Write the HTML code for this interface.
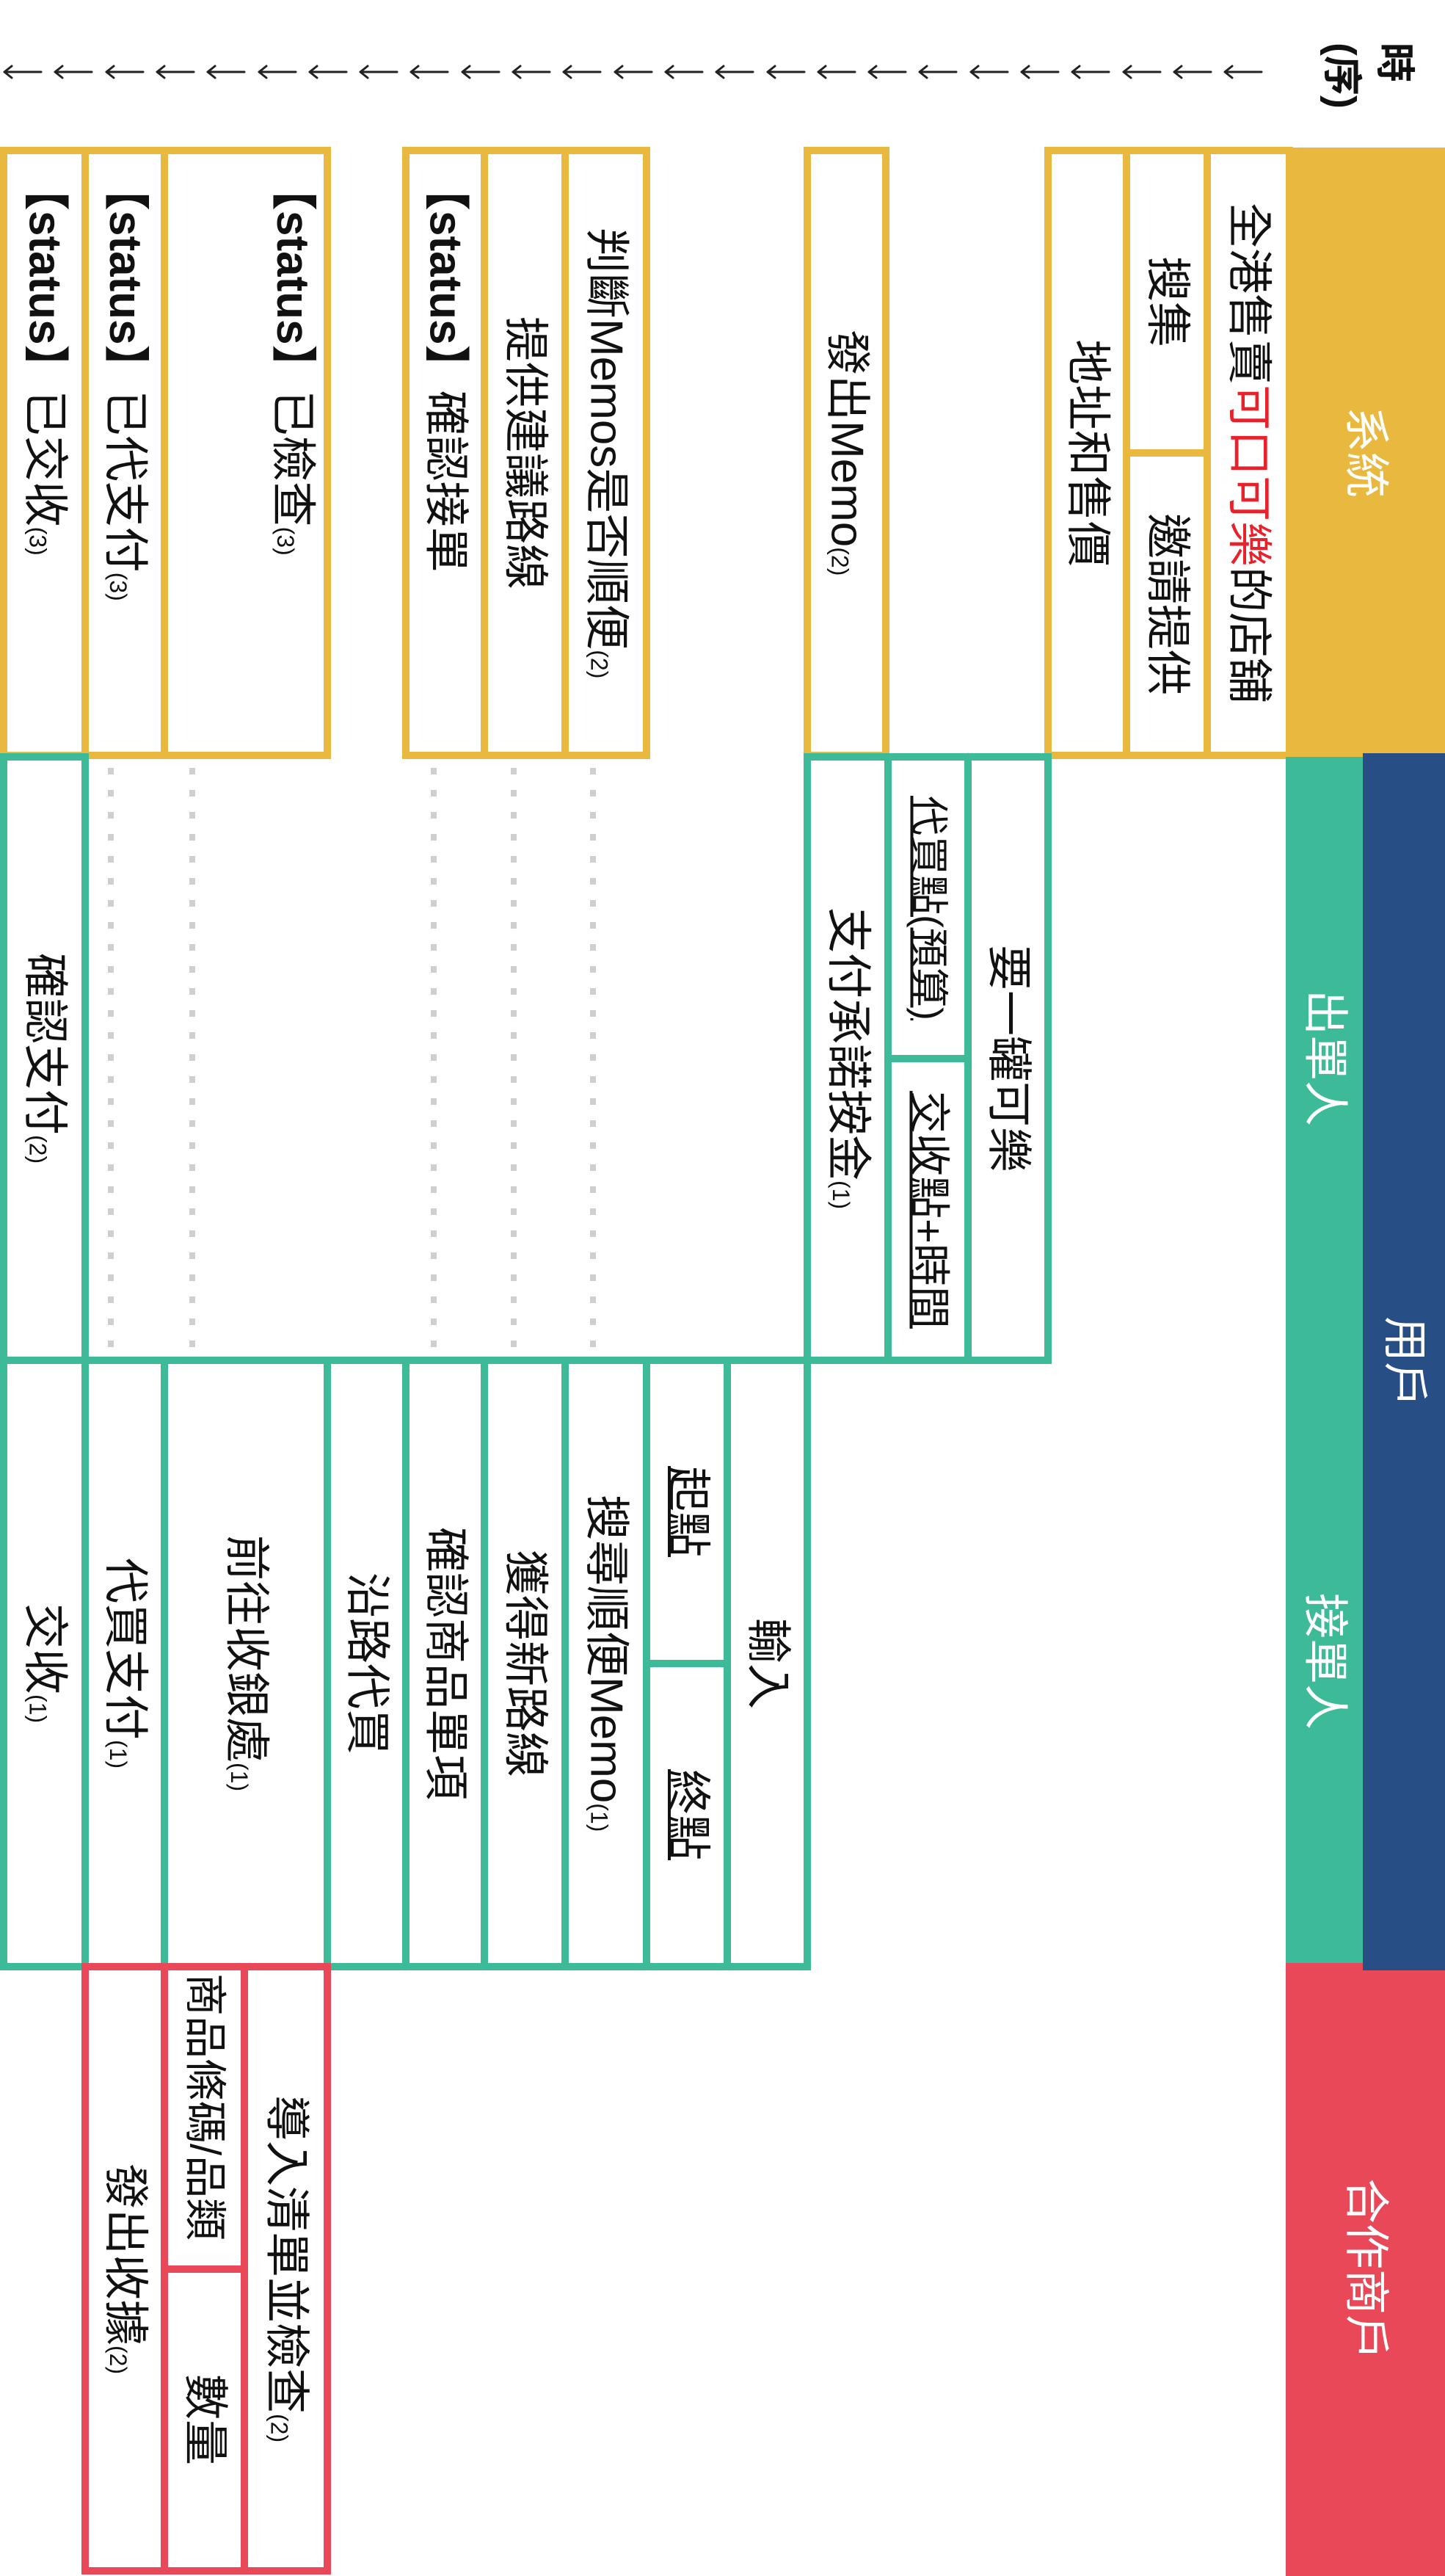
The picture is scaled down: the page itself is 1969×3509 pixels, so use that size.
<!DOCTYPE html>
<html>
<head>
<meta charset="utf-8">
<style>
html,body{margin:0;padding:0;background:#fff;}
body{width:1969px;height:3509px;position:relative;overflow:hidden;font-family:"Liberation Sans","Noto Sans CJK TC","Noto Sans CJK SC",sans-serif;color:#111;}
.c{position:absolute;box-sizing:border-box;border:10px solid;display:flex;align-items:center;justify-content:center;background:transparent;}
.Y{border-color:#E8B83F;}
.G{border-color:#3DBB98;}
.R{border-color:#E84858;}
.t{writing-mode:vertical-rl;text-orientation:sideways;font-size:62px;line-height:1;white-space:nowrap;}
.t small{font-size:32px;}
.t b{font-weight:bold;}
.st{align-items:flex-start;padding-top:15px;}
.u{text-decoration:underline;text-decoration-thickness:4px;text-underline-position:left;}
.h{position:absolute;display:flex;align-items:center;justify-content:center;}
.h .t{color:#fff;}
.dot{position:absolute;width:8px;top:1046px;height:792px;background:repeating-linear-gradient(to bottom,#cfcfcf 0 9px,transparent 9px 30px);}
</style>
</head>
<body>

<svg style="position:absolute;left:0;top:0" width="1760" height="200">
<g stroke="#222" stroke-width="3" fill="none" stroke-linecap="round">
<path d="M6 98h50M6 98l10 -8M6 98l10 8"/>
<path d="M75 98h50M75 98l10 -8M75 98l10 8"/>
<path d="M145 98h50M145 98l10 -8M145 98l10 8"/>
<path d="M214 98h50M214 98l10 -8M214 98l10 8"/>
<path d="M283 98h50M283 98l10 -8M283 98l10 8"/>
<path d="M353 98h50M353 98l10 -8M353 98l10 8"/>
<path d="M422 98h50M422 98l10 -8M422 98l10 8"/>
<path d="M491 98h50M491 98l10 -8M491 98l10 8"/>
<path d="M560 98h50M560 98l10 -8M560 98l10 8"/>
<path d="M630 98h50M630 98l10 -8M630 98l10 8"/>
<path d="M699 98h50M699 98l10 -8M699 98l10 8"/>
<path d="M768 98h50M768 98l10 -8M768 98l10 8"/>
<path d="M838 98h50M838 98l10 -8M838 98l10 8"/>
<path d="M907 98h50M907 98l10 -8M907 98l10 8"/>
<path d="M976 98h50M976 98l10 -8M976 98l10 8"/>
<path d="M1046 98h50M1046 98l10 -8M1046 98l10 8"/>
<path d="M1115 98h50M1115 98l10 -8M1115 98l10 8"/>
<path d="M1184 98h50M1184 98l10 -8M1184 98l10 8"/>
<path d="M1253 98h50M1253 98l10 -8M1253 98l10 8"/>
<path d="M1323 98h50M1323 98l10 -8M1323 98l10 8"/>
<path d="M1392 98h50M1392 98l10 -8M1392 98l10 8"/>
<path d="M1461 98h50M1461 98l10 -8M1461 98l10 8"/>
<path d="M1531 98h50M1531 98l10 -8M1531 98l10 8"/>
<path d="M1600 98h50M1600 98l10 -8M1600 98l10 8"/>
<path d="M1669 98h50M1669 98l10 -8M1669 98l10 8"/>
</g>
</svg>

<div class="t" style="position:absolute;left:1792px;top:58px;font-size:54px;font-weight:bold;line-height:72px;">時<br>(序)</div>

<div class="dot" style="left:147px"></div>
<div class="dot" style="left:258px"></div>
<div class="dot" style="left:587px"></div>
<div class="dot" style="left:696px"></div>
<div class="dot" style="left:804px"></div>

<div class="c Y st" style="left:0;top:200px;width:121px;height:834px"><span class="t"><b>【status】</b>已交收<small>(3)</small></span></div>
<div class="c Y st" style="left:111px;top:200px;width:118px;height:834px"><span class="t"><b>【status】</b>已代支付<small>(3)</small></span></div>
<div class="c Y st" style="left:219px;top:200px;width:232px;height:834px;justify-content:flex-end;padding-right:12px"><span class="t"><b>【status】</b>已檢查<small>(3)</small></span></div>

<div class="c Y st" style="left:548px;top:200px;width:117px;height:834px"><span class="t"><b>【status】</b>確認接單</span></div>
<div class="c Y" style="left:655px;top:200px;width:120px;height:834px"><span class="t">提供建議路線</span></div>
<div class="c Y" style="left:765px;top:200px;width:121px;height:834px"><span class="t">判斷Memos是否順便<small>(2)</small></span></div>

<div class="c Y" style="left:1095px;top:200px;width:117px;height:834px"><span class="t">發出Memo<small>(2)</small></span></div>

<div class="c Y" style="left:1423px;top:200px;width:117px;height:834px"><span class="t">地址和售價</span></div>
<div class="c Y" style="left:1530px;top:200px;width:120px;height:422px"><span class="t">搜集</span></div>
<div class="c Y" style="left:1530px;top:612px;width:120px;height:422px"><span class="t">邀請提供</span></div>
<div class="c Y" style="left:1640px;top:200px;width:122px;height:834px"><span class="t">全港售賣<span style="color:#E8212B">可口可樂</span>的店舖</span></div>

<div class="c G" style="left:0;top:1026px;width:121px;height:832px"><span class="t">確認支付<small>(2)</small></span></div>
<div class="c G" style="left:1095px;top:1026px;width:120px;height:832px"><span class="t">支付承諾按金<small>(1)</small></span></div>
<div class="c G" style="left:1205px;top:1026px;width:119px;height:421px"><span class="t u" style="font-size:54px">代買點(預算)</span></div>
<div class="c G" style="left:1205px;top:1437px;width:119px;height:421px"><span class="t u" style="font-size:58px">交收點+時間</span></div>
<div class="c G" style="left:1314px;top:1026px;width:119px;height:832px"><span class="t">要一罐可樂</span></div>

<div class="c G" style="left:0;top:1848px;width:121px;height:836px"><span class="t">交收<small>(1)</small></span></div>
<div class="c G" style="left:111px;top:1848px;width:118px;height:836px"><span class="t">代買支付<small>(1)</small></span></div>
<div class="c G" style="left:219px;top:1848px;width:232px;height:836px"><span class="t">前往收銀處<small>(1)</small></span></div>
<div class="c G" style="left:441px;top:1848px;width:117px;height:836px"><span class="t">沿路代買</span></div>
<div class="c G" style="left:548px;top:1848px;width:117px;height:836px"><span class="t">確認商品單項</span></div>
<div class="c G" style="left:655px;top:1848px;width:120px;height:836px"><span class="t">獲得新路線</span></div>
<div class="c G" style="left:765px;top:1848px;width:121px;height:836px"><span class="t">搜尋順便Memo<small>(1)</small></span></div>
<div class="c G" style="left:876px;top:1848px;width:120px;height:423px"><span class="t u">起點</span></div>
<div class="c G" style="left:876px;top:2261px;width:120px;height:423px"><span class="t u">終點</span></div>
<div class="c G" style="left:986px;top:1848px;width:119px;height:836px"><span class="t">輸入</span></div>

<div class="c R" style="left:111px;top:2674px;width:118px;height:833px"><span class="t">發出收據<small>(2)</small></span></div>
<div class="c R" style="left:219px;top:2674px;width:119px;height:422px;align-items:flex-start;padding-top:4px"><span class="t" style="font-size:58px">商品條碼/品類</span></div>
<div class="c R" style="left:219px;top:3086px;width:119px;height:421px"><span class="t">數量</span></div>
<div class="c R" style="left:328px;top:2674px;width:123px;height:833px"><span class="t">導入清單並檢查<small>(2)</small></span></div>

<div class="h" style="left:1752px;top:201px;width:217px;height:830px;background:#E8B83F"><span class="t">系統</span></div>
<div class="h" style="left:1752px;top:2674px;width:217px;height:835px;background:#E84858"><span class="t">合作商戶</span></div>
<div class="h" style="left:1752px;top:1031px;width:106px;height:1643px;background:#3DBB98"></div>
<div class="h" style="left:1857px;top:1026px;width:112px;height:1658px;background:#274F85"><span class="t">用戶</span></div>
<div class="h" style="left:1752px;top:1031px;width:105px;height:820px"><span class="t">出單人</span></div>
<div class="h" style="left:1752px;top:1853px;width:105px;height:821px"><span class="t">接單人</span></div>

</body>
</html>
